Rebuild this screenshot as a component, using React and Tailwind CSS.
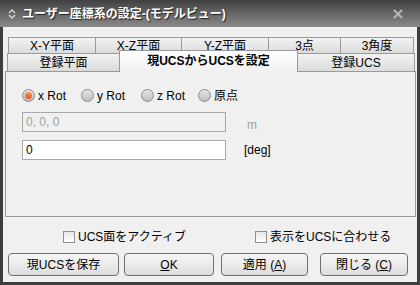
import React from "react";

const font = { fontFamily: '"Liberation Sans", "Noto Sans CJK JP", sans-serif' };

function BackTab({ w, children }) {
  return (
    <div
      className={`${w} h-[16px] flex items-center justify-center border border-b-0 border-[#9a9a9a] -ml-[1px] first:ml-0 bg-gradient-to-b from-[#f2f2f2] to-[#dcdcdc] text-[12px] leading-none text-black`}
    >
      {children}
    </div>
  );
}

function Radio({ checked, label }) {
  return (
    <div className="flex items-center gap-[3px]">
      <div className="w-[13px] h-[13px] rounded-full border border-[#8c8c8c] bg-gradient-to-b from-[#e6e6e6] to-[#bdbdbd] flex items-center justify-center">
        {checked && <div className="w-[7px] h-[7px] rounded-full bg-gradient-to-b from-[#ff9a5a] to-[#e0501a]" />}
      </div>
      <span className="text-[12px] leading-none text-black">{label}</span>
    </div>
  );
}

function Check({ label }) {
  return (
    <div className="flex items-center gap-[3px]">
      <div className="w-[12px] h-[12px] border border-[#8e8f8f] bg-gradient-to-b from-[#e8e8e8] to-[#ffffff]" />
      <span className="text-[12px] leading-none text-black">{label}</span>
    </div>
  );
}

function Btn({ w, children }) {
  return (
    <div
      className={`${w} h-[23px] rounded-[4px] border border-[#707070] bg-gradient-to-b from-[#f6f6f6] via-[#ebebeb] to-[#dcdcdc] flex items-center justify-center text-[12px] leading-none text-black`}
    >
      {children}
    </div>
  );
}

export default function App() {
  return (
    <div style={font} className="w-[420px] h-[285px] bg-[#3e3e3e] flex flex-col overflow-hidden">
      {/* Title bar */}
      <div className="h-[27px] shrink-0 flex items-center bg-gradient-to-b from-[#404040] via-[#676767] to-[#8a8a8a] pl-[7px] pr-[16px]">
        <svg width="10" height="12" viewBox="0 0 10 12" className="mr-[5px]">
          <path d="M2 5 L5 2 L8 5" fill="none" stroke="#d8d8d8" strokeWidth="1.4" />
          <path d="M2 7 L5 10 L8 7" fill="none" stroke="#d8d8d8" strokeWidth="1.4" />
        </svg>
        <span className="text-white font-bold text-[12px] leading-none [text-shadow:1px_1px_1px_#202020]">
          ユーザー座標系の設定-(モデルビュー)
        </span>
        <div className="flex-1" />
        <svg width="12" height="10" viewBox="0 0 12 10">
          <path d="M2 1 L10 9 M10 1 L2 9" stroke="#b8b8b8" strokeWidth="1.8" />
        </svg>
      </div>

      {/* Body */}
      <div className="flex-1 mx-[3px] mb-[3px] bg-[#f0f0f0] flex flex-col px-[2px] pt-[10px]">
        {/* Tab row 1 */}
        <div className="flex ml-[3px]">
          <BackTab w="w-[88px]">X-Y平面</BackTab>
          <BackTab w="w-[87px]">X-Z平面</BackTab>
          <BackTab w="w-[88px]">Y-Z平面</BackTab>
          <BackTab w="w-[73px]">3点</BackTab>
          <BackTab w="w-[74px]">3角度</BackTab>
        </div>
        {/* Tab row 2 */}
        <div className="flex ml-[2px] h-[18px] items-end relative z-10">
          <div className="w-[113px] h-[18px] flex items-center justify-center border border-b-0 border-[#9a9a9a] bg-gradient-to-b from-[#f2f2f2] to-[#dcdcdc] text-[12px] leading-none">
            登録平面
          </div>
          <div className="w-[179px] h-[22px] -ml-[1px] -mb-[1px] flex items-center justify-center border border-b-0 border-[#9a9a9a] bg-gradient-to-b from-[#ffffff] to-[#f0f0f0] text-[12px] font-bold leading-none pb-[2px]">
            現UCSからUCSを設定
          </div>
          <div className="w-[118px] h-[18px] -ml-[1px] flex items-center justify-center border border-b-0 border-[#9a9a9a] bg-gradient-to-b from-[#f2f2f2] to-[#dcdcdc] text-[12px] leading-none">
            登録UCS
          </div>
        </div>
        {/* Panel */}
        <div className="w-[411px] h-[146px] border border-[#9a9a9a] bg-[#f0f0f0] flex flex-col pl-[16px] pt-[17px]">
          <div className="flex items-center h-[13px]">
            <div className="w-[59px]"><Radio checked label="x Rot" /></div>
            <div className="w-[60px]"><Radio label="y Rot" /></div>
            <div className="w-[57px]"><Radio label="z Rot" /></div>
            <Radio label="原点" />
          </div>
          <div className="flex items-center mt-[10px]">
            <div className="w-[204px] h-[20px] border border-[#a8a8a8] bg-[#f0f0f0] flex items-center pl-[3px] text-[12px] text-[#a0a0a0] leading-none">
              0, 0, 0
            </div>
            <span className="ml-[21px] text-[12px] text-[#a0a0a0] leading-none mt-[6px]">m</span>
          </div>
          <div className="flex items-center mt-[8px]">
            <div className="w-[204px] h-[20px] border border-[#a8a8a8] bg-white flex items-center pl-[3px] text-[12px] text-black leading-none">
              0
            </div>
            <span className="ml-[18px] text-[12px] text-black leading-none">[deg]</span>
          </div>
        </div>

        {/* Checkbox row */}
        <div className="flex mt-[13px] h-[13px] items-center">
          <div className="ml-[58px] w-[192px]"><Check label="UCS面をアクティブ" /></div>
          <Check label="表示をUCSに合わせる" />
        </div>

        {/* Buttons */}
        <div className="flex mt-[10px] ml-[3px]">
          <Btn w="w-[111px]">現UCSを保存</Btn>
          <div className="w-[5px]" />
          <Btn w="w-[90px]"><span><span className="underline">O</span>K</span></Btn>
          <div className="w-[7px]" />
          <Btn w="w-[87px]"><span>適用 (<span className="underline">A</span>)</span></Btn>
          <div className="w-[12px]" />
          <Btn w="w-[88px]"><span>閉じる (<span className="underline">C</span>)</span></Btn>
        </div>
      </div>
    </div>
  );
}
